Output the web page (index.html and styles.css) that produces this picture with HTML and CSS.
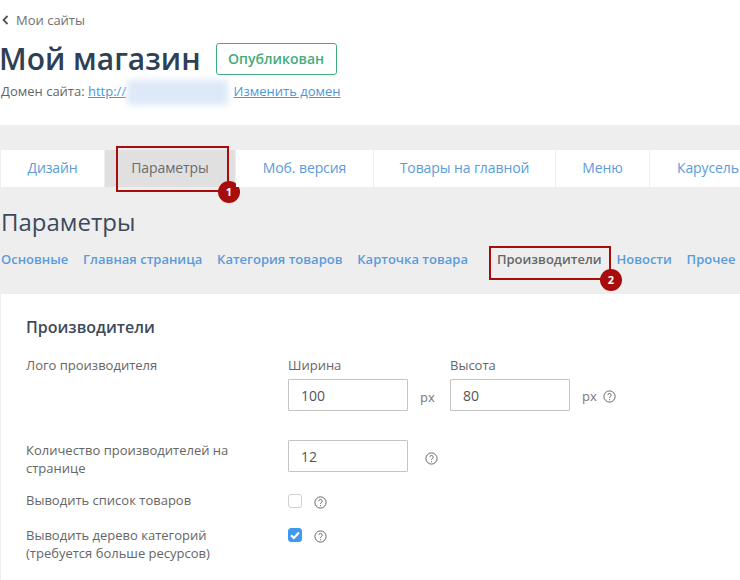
FILE: index.html
```html
<!DOCTYPE html>
<html lang="ru">
<head>
<meta charset="utf-8">
<title>Мой магазин</title>
<link rel="stylesheet" href="styles.css">
</head>
<body>
<header class="head">
  <a class="back"><svg class="chev" width="7" height="10" viewBox="0 0 7 10"><path d="M5.5 1 1.5 5l4 4" fill="none" stroke="#555" stroke-width="1.8"/></svg>Мои сайты</a>
  <div class="title-row">
    <h1>Мой магазин</h1>
    <span class="status">Опубликован</span>
  </div>
  <div class="domain">Домен сайта: <a class="lnk">http://<span class="masked"><span class="blur"></span></span></a> <a class="lnk">Изменить домен</a></div>
</header>
<main class="panel">
  <nav class="tabs">
    <a class="tab t1">Дизайн</a>
    <a class="tab t2 active">Параметры<span class="mark m1"><b class="num">1</b></span></a>
    <a class="tab t3">Моб. версия</a>
    <a class="tab t4">Товары на главной</a>
    <a class="tab t5">Меню</a>
    <a class="tab t6">Карусель</a>
  </nav>
  <h2>Параметры</h2>
  <nav class="sub">
    <a>Основные</a>
    <a>Главная страница</a>
    <a>Категория товаров</a>
    <a>Карточка товара</a>
    <a class="cur">Производители<span class="mark m2"><b class="num">2</b></span></a>
    <a class="after">Новости</a>
    <a>Прочее</a>
  </nav>
  <section class="card">
    <h3>Производители</h3>
    <div class="row r-logo">
      <div class="lab">Лого производителя</div>
      <div class="ctl">
        <div class="fld"><label>Ширина</label><div class="box">100</div></div>
        <span class="px">px</span>
        <div class="fld"><label>Высота</label><div class="box">80</div></div>
        <span class="px px2">px</span>
        <svg class="q q-logo" viewBox="0 0 13 13"><circle cx="6.5" cy="6.5" r="5.6"/><path d="M4.8 5.1a1.7 1.7 0 1 1 2.6 1.5c-.6.4-.9.7-.9 1.4"/><path d="M6.5 9.2v1"/></svg>
      </div>
    </div>
    <div class="row r-qty">
      <div class="lab">Количество производителей на странице</div>
      <div class="ctl">
        <div class="box">12</div>
        <svg class="q q-qty" viewBox="0 0 13 13"><circle cx="6.5" cy="6.5" r="5.6"/><path d="M4.8 5.1a1.7 1.7 0 1 1 2.6 1.5c-.6.4-.9.7-.9 1.4"/><path d="M6.5 9.2v1"/></svg>
      </div>
    </div>
    <div class="row r-list">
      <div class="lab">Выводить список товаров</div>
      <div class="ctl">
        <span class="chk"></span>
        <svg class="q" viewBox="0 0 13 13"><circle cx="6.5" cy="6.5" r="5.6"/><path d="M4.8 5.1a1.7 1.7 0 1 1 2.6 1.5c-.6.4-.9.7-.9 1.4"/><path d="M6.5 9.2v1"/></svg>
      </div>
    </div>
    <div class="row r-tree">
      <div class="lab">Выводить дерево категорий (требуется больше ресурсов)</div>
      <div class="ctl">
        <span class="chk on"><svg width="14" height="14" viewBox="0 0 14 14"><path d="M3 7.2 5.8 10 11 4.4" fill="none" stroke="#fff" stroke-width="2.2"/></svg></span>
        <svg class="q" viewBox="0 0 13 13"><circle cx="6.5" cy="6.5" r="5.6"/><path d="M4.8 5.1a1.7 1.7 0 1 1 2.6 1.5c-.6.4-.9.7-.9 1.4"/><path d="M6.5 9.2v1"/></svg>
      </div>
    </div>
  </section>
</main>
</body>
</html>
```

FILE: styles.css
```css
* { box-sizing: border-box; }
html, body { margin: 0; height: 100%; }
body {
  width: 740px;
  height: 580px;
  overflow: hidden;
  background: #fff;
  font-family: "Open Sans", "Noto Sans", sans-serif;
  font-size: 13px;
  color: #666;
  display: flex;
  flex-direction: column;
}
.head { height: 125px; padding-top: 11px; flex: none; }
.back {
  display: flex;
  align-items: center;
  height: 18px;
  padding-left: 2px;
  color: #6f6f6f;
  font-size: 13px;
}
.chev { margin-right: 7px; }
.title-row { display: flex; align-items: center; margin-top: 14px; height: 32px; }
h1 {
  margin: 0 0 0 -1px;
  font-size: 30px;
  font-weight: 600;
  line-height: 32px;
  color: #2f4054;
}
.status {
  margin-left: 15px;
  width: 121px;
  height: 32px;
  border: 1px solid #3fae7c;
  border-radius: 3px;
  color: #45ac79;
  font-size: 14px;
  font-weight: 600;
  line-height: 30px;
  text-align: center;
}
.domain { margin-top: 7px; padding-left: 1px; line-height: 19px; white-space: nowrap; color: #666; }
.lnk { color: #4f95d8; text-decoration: underline; }
.masked { display: inline-block; width: 104px; height: 10px; position: relative; }
.blur {
  position: absolute;
  left: 1px; top: -6px;
  width: 101px; height: 25px;
  background: #dde9f8;
  filter: blur(3px);
}
.panel { flex: 1; background: #eee; padding-top: 25px; min-height: 0; }
.tabs { display: flex; height: 37px; padding-left: 1px; gap: 1px; overflow: visible; }
.tab {
  position: relative;
  flex: none;
  background: #fff;
  color: #5a9bdb;
  font-size: 14px;
  line-height: 36px;
  letter-spacing: -0.1px;
  text-align: center;
}
.t1 { width: 103px; }
.t2 { width: 130px; }
.t3 { width: 137px; }
.t4 { width: 181px; }
.t5 { width: 93px; }
.t6 { width: 110px; text-align: left; padding-left: 27px; white-space: nowrap; }
.tab.active { background: #e0e0e0; color: #6b6b6b; }
.mark { position: absolute; border: 2px solid #a80d0d; pointer-events: none; }
.m1 { left: 11px; top: -4px; width: 113px; height: 46px; }
.m2 { left: -8px; top: -4px; width: 122px; height: 34px; }
.num {
  position: absolute;
  right: -13px; bottom: -13px;
  width: 22px; height: 22px;
  border-radius: 50%;
  background: #a80d0d;
  color: #fff;
  font-family: "Open Sans", sans-serif;
  font-size: 11px;
  font-weight: 700;
  line-height: 22px;
  letter-spacing: 0;
  text-align: center;
}
h2 {
  margin: 18px 0 0 1px;
  font-size: 24px;
  font-weight: 400;
  line-height: 34px;
  color: #3d4a5c;
}
.sub {
  display: flex;
  gap: 14.8px;
  margin-top: 11px;
  padding-left: 1px;
  height: 18px;
  font-size: 13px;
  font-weight: 600;
  line-height: 18px;
  white-space: nowrap;
  color: #5a9bdb;
}
.sub a { position: relative; flex: none; }
.sub .cur { color: #666; margin-left: 14.2px; }
.card {
  margin: 26px 0 0 1px;
  height: 300px;
  background: #fff;
  padding: 23px 0 0 25px;
}
h3 { margin: 0; font-size: 16px; font-weight: 600; line-height: 20px; color: #3d4a5c; }
.row { display: flex; }
.lab { width: 262px; flex: none; line-height: 18px; color: #666; padding-right: 50px; }
.ctl { display: flex; align-items: flex-start; }
.r-logo { margin-top: 19px; }
.r-qty { margin-top: 29px; }
.r-qty .lab { padding-top: 1px; }
.r-list { margin-top: 14px; }
.r-tree { margin-top: 17px; }
.fld label { display: block; line-height: 18px; margin-bottom: 5px; color: #666; }
.box {
  width: 120px;
  height: 32px;
  border: 1px solid #c4c4c4;
  border-radius: 1px;
  padding: 1px 0 0 12px;
  font-size: 14px;
  line-height: 30px;
  color: #555;
  background: #fff;
}
.px { width: 42px; padding: 32px 0 0 12px; line-height: 18px; color: #777; }
.px2 { width: 39px; padding-top: 31px; padding-left: 12px; }
.q { width: 13px; height: 13px; flex: none; fill: none; stroke: #666; stroke-width: 1; margin: 4px 0 0 12px; }
.q-logo { margin: 34px 0 0 -6px; }
.q-qty { margin: 12px 0 0 17px; }
.r-list .q { margin-top: 5px; }
.chk {
  width: 14px; height: 14px;
  border: 1px solid #d0d0d0;
  border-radius: 3px;
  background: #fff;
  flex: none;
  margin-top: 2px;
}
.r-list .chk { margin-top: 3px; }
.chk.on { background: #3f98ee; border-color: #3f98ee; position: relative; }
.chk.on svg { position: absolute; left: -1px; top: -1px; }
```
